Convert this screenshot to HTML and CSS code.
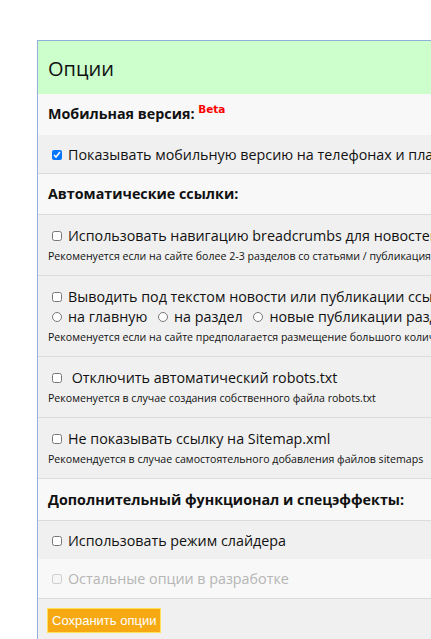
FILE: index.html
```html
<!DOCTYPE html>
<html lang="ru">

<head>
    <meta charset="UTF-8">
    <title>Опции</title>
    <link rel="stylesheet" href="styles.css">
</head>

<body>
    <form class="panel">
        <h1 class="panel-head">Опции</h1>

        <div class="row title light">Мобильная версия: <sup class="beta">Beta</sup></div>
        <div class="row opt single line">
            <label><input type="checkbox" checked> Показывать мобильную версию на телефонах и планшетах</label>
        </div>

        <div class="row title light line">Автоматические ссылки:</div>
        <div class="row opt line">
            <label><input type="checkbox"> Использовать навигацию breadcrumbs для новостей и публикаций</label>
            <p class="note">Рекоменуется если на сайте более 2-3 разделов со статьями / публикациями</p>
        </div>
        <div class="row opt line">
            <label><input type="checkbox"> Выводить под текстом новости или публикации ссылку</label>
            <div class="radios">
                <label><input type="radio" name="link"> на главную</label>
                <label><input type="radio" name="link"> на раздел</label>
                <label><input type="radio" name="link"> новые публикации раздела</label>
            </div>
            <p class="note">Рекоменуется если на сайте предполагается размещение большого количества публикаций</p>
        </div>
        <div class="row opt line">
            <label><input type="checkbox">&nbsp;Отключить автоматический robots.txt</label>
            <p class="note">Рекоменуется в случае создания собственного файла robots.txt</p>
        </div>
        <div class="row opt line">
            <label><input type="checkbox"> Не показывать ссылку на Sitemap.xml</label>
            <p class="note">Рекомендуется в случае самостоятельного добавления файлов sitemaps</p>
        </div>

        <div class="row title light line extra">Дополнительный функционал и спецэффекты:</div>
        <div class="row opt single slider">
            <label><input type="checkbox"> Использовать режим слайдера</label>
        </div>
        <div class="row opt single light muted line">
            <label><input type="checkbox" disabled> Остальные опции в разработке</label>
        </div>

        <div class="row actions">
            <button type="button" class="save">Сохранить опции</button>
        </div>
    </form>
</body></html>
```

FILE: styles.css
```css
body {
    margin: 0;
    overflow: hidden;
    font-family: "Open Sans", "Liberation Sans", sans-serif;
    color: #111;
    background: white;
}

.panel {
    margin: 40px 0 0 37px;
    width: 700px;
    border: 1px solid #8fb1da;
    border-right: 0;
    background: #f0f0f0;
}

.panel-head {
    margin: 0;
    height: 53px;
    padding-left: 10px;
    background: #ccffcc;
    font-size: 20px;
    font-weight: normal;
    line-height: 55px;
}

.row {
    padding: 11px 10px 8px;
    font-size: 14.3px;
    line-height: 20px;
    white-space: nowrap;
}

.light {
    background: #f8f8f8;
}

.line {
    border-bottom: 1px solid #dcdcdc;
}

.title {
    padding: 10px 10px 11px;
    font-weight: bold;
}

.title.line {
    padding-bottom: 10px;
}

.title.extra {
    padding-top: 11px;
}

.beta {
    font-family: "DejaVu Sans", sans-serif;
    font-size: 10.5px;
    color: #f00;
    vertical-align: 6px;
    line-height: 0;
}

.opt.single {
    padding: 10px 10px 8px;
}

.opt.slider {
    padding: 10px 10px 8px;
}

.opt label {
    display: inline-flex;
    align-items: center;
}

input[type="checkbox"],
input[type="radio"] {
    width: 10px;
    height: 10px;
    margin: 0 6px 0 4px;
}

.radios label {
    margin-right: 3px;
}

.note {
    margin: 0;
    font-size: 10.6px;
    line-height: 21px;
}

.muted {
    color: #b5b5b5;
}

.muted.single {
    padding-bottom: 9px;
}

.actions {
    padding: 9px 9px;
}

.save {
    height: 25px;
    padding: 0 4px;
    border: 1px solid #ffe256;
    border-radius: 0;
    background: #f6a913;
    color: white;
    font-family: "Liberation Sans", Arial, sans-serif;
    font-size: 13px;
}
```
